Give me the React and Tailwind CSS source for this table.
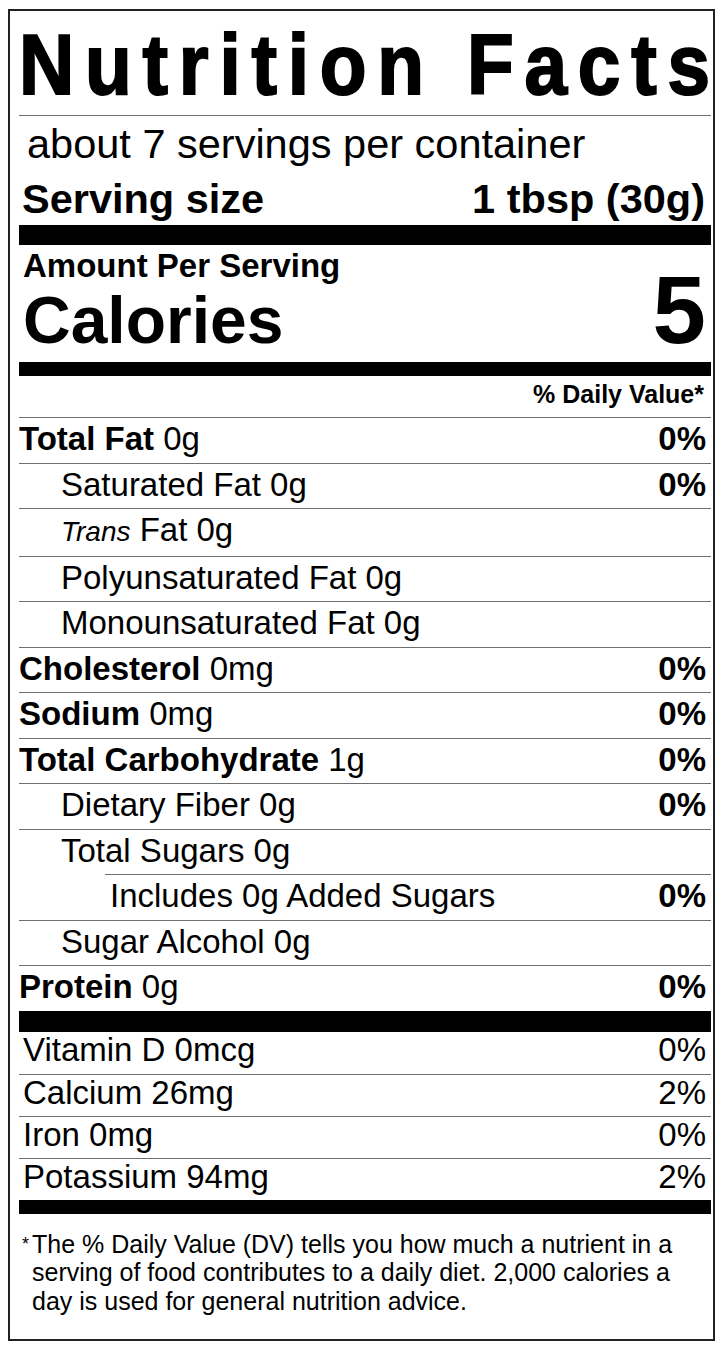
const nutrients = [
  { bold: "Total Fat", rest: " 0g", dv: "0%" },
  { level: 1, rest: "Saturated Fat 0g", dv: "0%" },
  { level: 1, trans: true },
  { level: 1, rest: "Polyunsaturated Fat 0g" },
  { level: 1, rest: "Monounsaturated Fat 0g" },
  { bold: "Cholesterol", rest: " 0mg", dv: "0%" },
  { bold: "Sodium", rest: " 0mg", dv: "0%" },
  { bold: "Total Carbohydrate", rest: " 1g", dv: "0%" },
  { level: 1, rest: "Dietary Fiber 0g", dv: "0%" },
  { level: 1, rest: "Total Sugars 0g" },
  { level: 2, rest: "Includes 0g Added Sugars", dv: "0%" },
  { level: 1, rest: "Sugar Alcohol 0g" },
  { bold: "Protein", rest: " 0g", dv: "0%" },
];

const vitamins = [
  { name: "Vitamin D 0mcg", dv: "0%" },
  { name: "Calcium 26mg", dv: "2%" },
  { name: "Iron 0mg", dv: "0%" },
  { name: "Potassium 94mg", dv: "2%" },
];

function NutrientRow({ row }) {
  // the added-sugars rule only starts under the sub item
  const wrap =
    row.level === 2
      ? "ml-[86px] border-t border-[#6e6e6e] pl-[4px]"
      : "border-t border-[#6e6e6e]";
  const pad = row.level === 1 ? "pl-[42px]" : row.level === 2 ? "pl-[1px]" : "pl-0";

  return (
    <div className={wrap}>
      <div className={`flex justify-between items-baseline text-[33px] leading-[41px] pb-[3.5px] pr-[5px] ${pad}`}>
        <span className="whitespace-nowrap">
          {row.bold && <span className="font-bold">{row.bold}</span>}
          {row.trans ? (
            <>
              <span className="italic text-[28px]">Trans</span> Fat 0g
            </>
          ) : (
            row.rest
          )}
        </span>
        {row.dv && <span className="font-bold">{row.dv}</span>}
      </div>
    </div>
  );
}

export default function App() {
  return (
    <div className="min-h-screen bg-white pt-[9px] pl-[8px] text-black font-['Liberation_Sans',Arial,sans-serif]">
      <div className="w-[707px] border-2 border-[#222] pl-[9px] pr-[2px] pb-[24px]">
        <div className="mt-[11px] h-[85px] text-[85px] leading-[85px] font-bold whitespace-nowrap origin-left scale-x-[0.9] tracking-[12px] [-webkit-text-stroke:2px_black]">
          Nutrition Facts
        </div>
        <div className="mt-[8px] h-px bg-[#6e6e6e]" />

        <div className="mt-[6px] pl-[8px] text-[41.5px] leading-[44px] whitespace-nowrap">
          about 7 servings per container
        </div>
        <div className="mt-[11px] flex justify-between pl-[3px] pr-[6px] text-[41.5px] leading-[44px] font-bold">
          <span>Serving size</span>
          <span>1 tbsp (30g)</span>
        </div>
        <div className="mt-[4px] h-[20px] bg-black" />

        <div className="flex justify-between items-end pr-[5px]">
          <div className="pl-[4px]">
            <div className="mt-[3px] text-[33px] leading-[36px] font-bold">Amount Per Serving</div>
            <div className="text-[66px] leading-[73px] font-bold">Calories</div>
          </div>
          <div className="text-[96px] leading-[94px] font-bold">5</div>
        </div>
        <div className="mt-[5px] h-[14px] bg-black" />

        <div className="h-[41px] text-right pr-[7px] text-[25px] leading-[37px] font-bold">
          % Daily Value*
        </div>

        {nutrients.map((row, i) => (
          <NutrientRow key={i} row={row} />
        ))}

        <div className="h-[21px] bg-black" />

        {vitamins.map((v, i) => (
          <div
            key={v.name}
            className={
              i === 0
                ? "flex justify-between h-[42px] pl-[4px] pr-[5px] text-[33px] leading-[36px]"
                : "flex justify-between h-[42px] border-t border-[#6e6e6e] pl-[4px] pr-[5px] text-[33px] leading-[36px]"
            }
          >
            <span>{v.name}</span>
            <span>{v.dv}</span>
          </div>
        ))}

        <div className="h-[14px] bg-black" />

        <div className="mt-[16px] flex">
          <span className="w-[13px] shrink-0 pl-[3px] text-[18px] leading-[28.5px]">*</span>
          <p className="text-[25px] leading-[28.5px] whitespace-nowrap">
            The % Daily Value (DV) tells you how much a nutrient in a
            <br />
            serving of food contributes to a daily diet. 2,000 calories a
            <br />
            day is used for general nutrition advice.
          </p>
        </div>
      </div>
    </div>
  );
}
